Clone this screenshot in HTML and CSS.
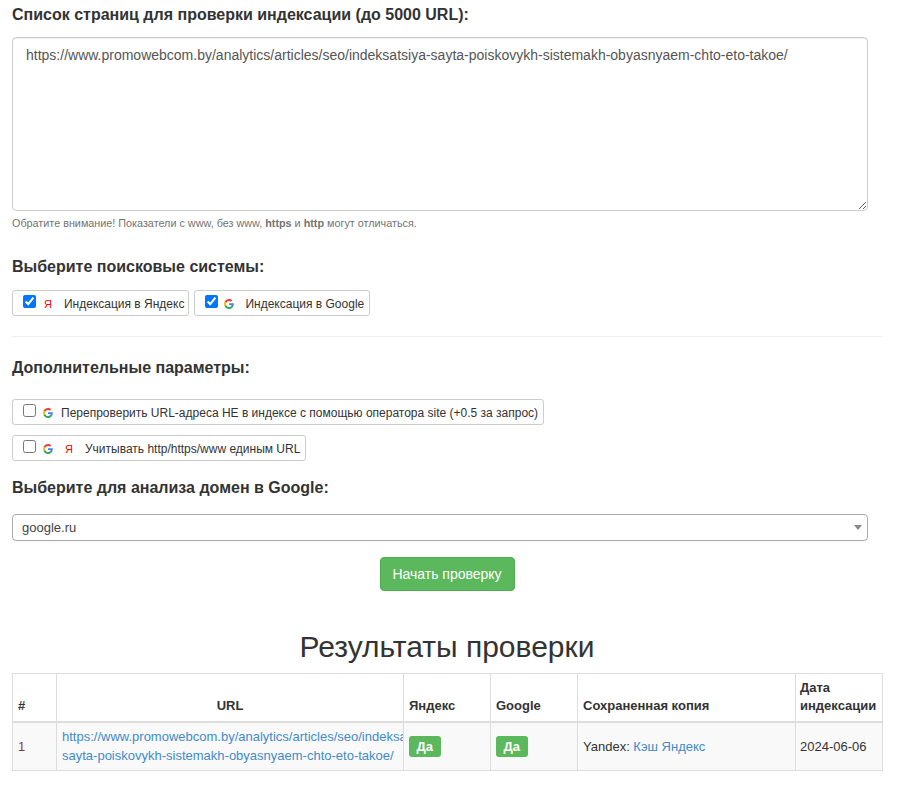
FILE: index.html
```html
<!DOCTYPE html>
<html lang="ru">
<head>
<meta charset="utf-8">
<title>Проверка индексации</title>
<link rel="stylesheet" href="styles.css">
</head>
<body>
<svg class="defs" width="0" height="0" aria-hidden="true">
  <symbol id="g" viewBox="0 0 48 48">
    <path fill="#EA4335" d="M24 9.5c3.5 0 6.700 1.200 9.200 3.600l6.900-6.900C35.900 2.400 30.500 0 24 0 14.600 0 6.500 5.400 2.600 13.200l8 6.200C12.500 13.700 17.800 9.500 24 9.500z"/>
    <path fill="#4285F4" d="M46.980 24.550c0-1.570-.15-3.090-.38-4.550H24v9.020h12.940c-.58 2.960-2.260 5.480-4.780 7.180l7.730 6c4.510-4.180 7.090-10.360 7.090-17.650z"/>
    <path fill="#FBBC05" d="M10.530 28.590c-.48-1.450-.76-2.990-.76-4.590s.27-3.140.76-4.590l-7.980-6.190C.92 16.460 0 20.120 0 24c0 3.880.92 7.540 2.560 10.780l7.970-6.190z"/>
    <path fill="#34A853" d="M24 48c6.480 0 11.930-2.130 15.890-5.810l-7.730-6c-2.150 1.450-4.920 2.300-8.160 2.300-6.260 0-11.570-4.220-13.470-9.910l-7.980 6.190C6.510 42.620 14.620 48 24 48z"/>
  </symbol>
</svg>
<form class="page">
  <label class="title" for="urls">Список страниц для проверки индексации (до 5000 URL):</label>
  <textarea id="urls" class="urls">https://www.promowebcom.by/analytics/articles/seo/indeksatsiya-sayta-poiskovykh-sistemakh-obyasnyaem-chto-eto-takoe/</textarea>
  <p class="help">Обратите внимание! Показатели с www, без www, <b>https</b> и <b>http</b> могут отличаться.</p>

  <div class="title engines-title">Выберите поисковые системы:</div>
  <div class="engines">
    <label class="opt opt-ya"><input type="checkbox" checked><span class="ya ya-first">Я</span><span class="txt txt-ya">Индексация в Яндекс</span></label>
    <label class="opt"><input type="checkbox" checked><svg class="gi gi-first"><use href="#g"/></svg><span class="txt txt-g">Индексация в Google</span></label>
  </div>
  <hr class="rule">

  <div class="title extra-title">Дополнительные параметры:</div>
  <div class="extras">
    <label class="opt"><input type="checkbox"><svg class="gi"><use href="#g"/></svg><span class="txt txt-re">Перепроверить URL-адреса НЕ в индексе с помощью оператора site (+0.5 за запрос)</span></label>
    <label class="opt"><input type="checkbox"><svg class="gi"><use href="#g"/></svg><span class="ya ya-second">Я</span><span class="txt txt-un">Учитывать http/https/www единым URL</span></label>
  </div>

  <div class="title domain-title">Выберите для анализа домен в Google:</div>
  <div class="select-wrap">
    <select class="domain"><option>google.ru</option></select>
  </div>
  <div class="actions"><button type="button" class="go">Начать проверку</button></div>

  <h2 class="results-title">Результаты проверки</h2>
  <table class="results">
    <colgroup>
      <col class="c-num"><col class="c-url"><col class="c-ya"><col class="c-go"><col class="c-copy"><col class="c-date">
    </colgroup>
    <thead>
      <tr>
        <th>#</th><th class="center">URL</th><th>Яндекс</th><th>Google</th><th>Сохраненная копия</th><th>Дата индексации</th>
      </tr>
    </thead>
    <tbody>
      <tr>
        <td class="num">1</td>
        <td class="urlcell"><div class="clip"><a href="#">https://www.promowebcom.by/analytics/articles/seo/indeksatsiya-<br>sayta-poiskovykh-sistemakh-obyasnyaem-chto-eto-takoe/</a></div></td>
        <td><span class="badge">Да</span></td>
        <td><span class="badge">Да</span></td>
        <td>Yandex: <a href="#">Кэш Яндекс</a></td>
        <td>2024-06-06</td>
      </tr>
    </tbody>
  </table>
</form>
</body>
</html>
```
FILE: styles.css
```css
* { box-sizing: border-box; }
html, body { margin: 0; padding: 0; background: #fff; }
body { font-family: "Liberation Sans", Arial, sans-serif; font-size: 14px; line-height: 20px; color: #333; height: 785px; overflow: hidden; }
.defs { position: absolute; }
.page { margin-left: 12px; padding-top: 5px; width: 870px; }
.title { display: block; font-size: 16px; font-weight: 700; line-height: 20px; color: #333; }
.urls { display: block; width: 856px; height: 174px; margin-top: 12px; padding: 7px 13px 6px; border: 1px solid #ccc; border-radius: 4px; font: 14px/20px "Liberation Sans", Arial, sans-serif; color: #555; box-shadow: inset 0 1px 1px rgba(0,0,0,.075); outline: none; }
.help { margin: 5px 0 0; font-size: 10.8px; line-height: 15px; color: #737373; }
.engines-title { margin-top: 26px; }
.engines { display: flex; gap: 5px; margin-top: 13px; }
.opt { display: flex; align-items: center; height: 26px; padding: 0 5px 0 10px; border: 1px solid #ccc; border-radius: 3px; font-size: 12px; font-weight: 400; color: #333; width: fit-content; }
.opt-ya { padding-right: 4px; }
.opt input { width: 13px; height: 13px; margin: 0 0 3px; accent-color: #0075ff; flex: none; }
.txt { padding-top: 2px; }
.gi { width: 10px; height: 10px; flex: none; margin: 2px 0 0 7px; }
.gi-first { margin-left: 6px; }
.ya { color: #f00; font-size: 11px; flex: none; line-height: 12px; padding-top: 2px; }
.ya-first { margin-left: 8px; }
.ya-second { margin-left: 12px; }
.txt-ya { margin-left: 12px; }
.txt-g { margin-left: 11px; }
.txt-re { margin-left: 8px; }
.txt-un { margin-left: 12px; }
.rule { height: 1px; margin: 20px 0 0; border: 0; background: #eee; }
.extra-title { margin-top: 21px; }
.extras { display: flex; flex-direction: column; gap: 10px; margin-top: 21px; }
.domain-title { margin-top: 17px; }
.select-wrap { position: relative; width: 856px; margin-top: 16px; }
.select-wrap::after { content: ""; position: absolute; right: 6px; top: 11px; border-style: solid; border-width: 5px 4px 0; border-color: #888 transparent transparent; pointer-events: none; }
.domain { display: block; width: 100%; height: 27px; padding: 0 0 0 9px; border: 1px solid #aaa; border-radius: 4px; background: #fff; font: 13px "Liberation Sans", Arial, sans-serif; color: #444; appearance: none; outline: none; }
.actions { display: flex; justify-content: center; margin-top: 16px; }
.go { width: 135px; height: 34px; padding: 0; border: 1px solid #4cae4c; border-radius: 4px; background: #5cb85c; color: #fff; font: 14px/20px "Liberation Sans", Arial, sans-serif; }
.results-title { margin: 39px 0 10px; font-size: 30px; font-weight: 400; line-height: 33px; text-align: center; color: #333; }
.results { width: 870px; table-layout: fixed; border-collapse: collapse; border: 1px solid #ddd; font-size: 13px; }
.c-num { width: 44px; } .c-url { width: 347px; } .c-ya { width: 87px; } .c-go { width: 87px; } .c-copy { width: 218px; } .c-date { width: 87px; }
.results th, .results td { border: 1px solid #ddd; padding: 5px; text-align: left; }
.results th { font-size: 13px; font-weight: 700; line-height: 18px; vertical-align: bottom; border-bottom: 2px solid #ddd; padding: 5px 5px 6px; }
.results th.center { text-align: center; }
.results td { vertical-align: middle; background: #f9f9f9; line-height: 19px; padding: 4px 5px 5px; }
.results th:last-child, .results td:last-child { padding-left: 4px; }
.results .num { color: #8a3b32; }
.results .urlcell { padding-right: 0; }
.clip { overflow: hidden; white-space: nowrap; }
a { color: #428bca; text-decoration: none; }
.badge { display: inline-block; padding: 0 7.5px; height: 21px; border-radius: 3px; background: #5cb85c; color: #fff; font-size: 13px; font-weight: 700; line-height: 21px; vertical-align: middle; }
```
